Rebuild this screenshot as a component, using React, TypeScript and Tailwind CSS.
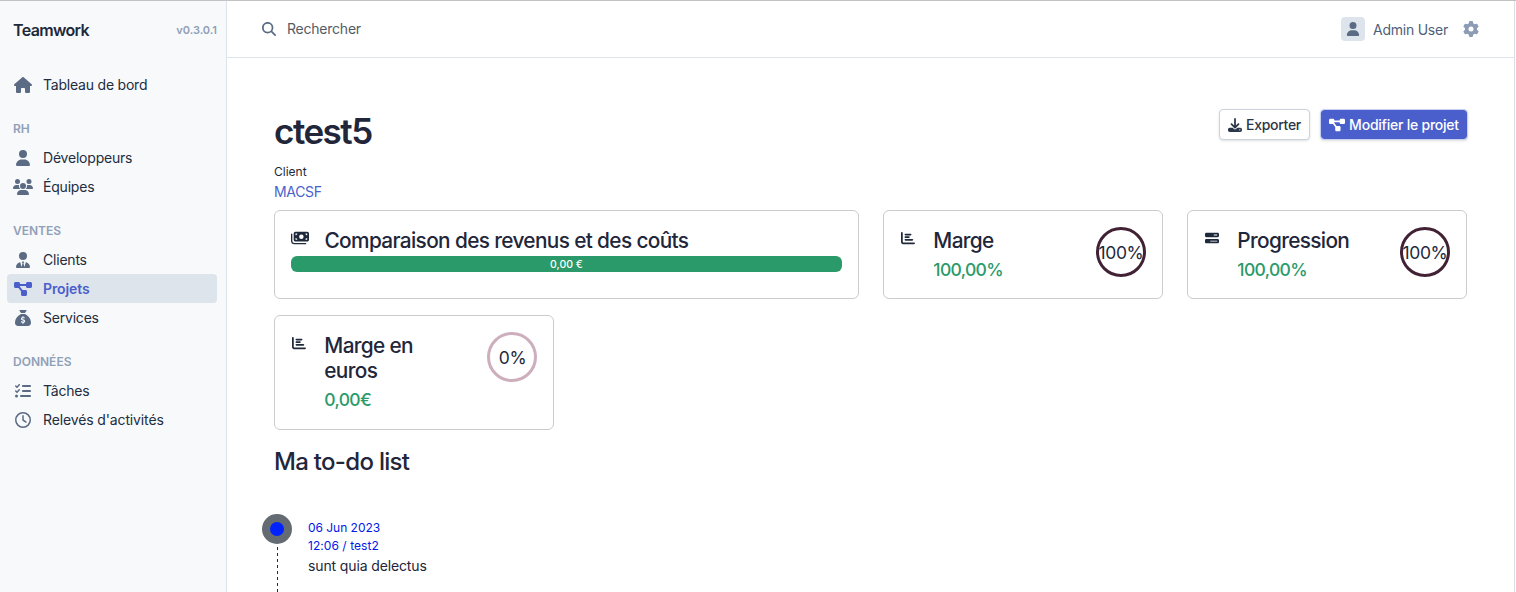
import type { ReactNode } from "react";
import type { IconType } from "react-icons";
import {
  FaBarsProgress,
  FaChartBar,
  FaDiagramProject,
  FaDownload,
  FaGear,
  FaHouse,
  FaListCheck,
  FaMagnifyingGlass,
  FaMoneyBills,
  FaRegClock,
  FaSackDollar,
  FaUser,
  FaUsers,
  FaUserTie,
} from "react-icons/fa6";

type ItemProps = { icon: IconType; label: string; active?: boolean; size?: string; spacing?: string };

function NavItem({ icon: Icon, label, active, size = "size-4", spacing = "tracking-[-0.21px]" }: ItemProps) {
  return (
    <a
      className={`flex h-[29px] items-center rounded px-[6px] ${
        active ? "bg-[#dee4ec] font-semibold text-[#4a5fcb]" : "text-[#222d40]"
      }`}
    >
      <span className={`flex w-5 justify-center ${active ? "" : "text-[#5b6b84]"}`}>
        <Icon className={`${size} shrink-0`} />
      </span>
      <span className={`ml-[10px] whitespace-nowrap text-[14px] ${spacing}`}>{label}</span>
    </a>
  );
}

function NavTitle({ children }: { children: ReactNode }) {
  return (
    <h2 className="mt-[17px] flex h-[25px] items-center px-[6px] text-[12px] font-semibold text-[#90a0b7]">
      {children}
    </h2>
  );
}

function Ring({ value, full }: { value: string; full?: boolean }) {
  return (
    <div
      className={`flex size-[50px] shrink-0 items-center justify-center rounded-full border-[3px] pt-0.5 text-[17.5px] tracking-[-0.4px] text-[#1e293b] ${
        full ? "border-[#412234]" : "border-[#cdaebd] pl-px"
      }`}
    >
      {value}
    </div>
  );
}

type StatProps = { icon: IconType; title: string; amount: string; ring: string; full?: boolean; className?: string };

function StatCard({ icon: Icon, title, amount, ring, full, className = "" }: StatProps) {
  return (
    <section className={`flex w-[280px] items-start rounded-md border border-[#cbcbcd] p-4 ${className}`}>
      <span className="mt-[3.5px] flex w-4 shrink-0 justify-center text-[#1e293b]">
        <Icon className="size-[14px]" />
      </span>
      <div className="ml-[17.3px] flex-1">
        <h3 className="w-[120px] pt-px text-[20.8px] leading-[25px] font-medium tracking-[-0.65px] text-[#22263a]">
          {title}
        </h3>
        <p className="mt-1 text-[17.5px] leading-[25px] font-medium tracking-[-0.65px] text-[#2a9a6b]">{amount}</p>
      </div>
      <Ring value={ring} full={full} />
    </section>
  );
}

export default function App() {
  return (
    <div className="flex h-[592px] w-[1516px] overflow-hidden border-t border-[#c2c2c4] bg-white font-['Inter',sans-serif] text-[14px] text-[#22263a]">
      <aside className="w-[227px] shrink-0 border-r border-[#dee4ec] bg-[#f8f9fb] pr-[9px] pl-[7px]">
        <div className="flex h-[58px] items-center justify-between pl-[6px]">
          <span className="text-[16px] font-semibold tracking-[-0.65px] text-[#1e293b]">Teamwork</span>
          <span className="text-[11px] font-semibold text-[#90a0b7]">v0.3.0.1</span>
        </div>
        <nav className="pt-[11px]">
          <NavItem icon={FaHouse} label="Tableau de bord" size="size-[18px]" />
          <NavTitle>RH</NavTitle>
          <div className="pt-0.5">
            <NavItem icon={FaUser} label="Développeurs" />
            <NavItem icon={FaUsers} label="Équipes" size="size-5" />
          </div>
          <NavTitle>VENTES</NavTitle>
          <div className="pt-0.5">
            <NavItem icon={FaUserTie} label="Clients" />
            <NavItem icon={FaDiagramProject} label="Projets" active size="size-[18px]" spacing="tracking-[-0.1px]" />
            <NavItem icon={FaSackDollar} label="Services" />
          </div>
          <NavTitle>DONNÉES</NavTitle>
          <div className="pt-0.5">
            <NavItem icon={FaListCheck} label="Tâches" />
            <NavItem icon={FaRegClock} label="Relevés d'activités" spacing="tracking-[-0.13px]" />
          </div>
        </nav>
      </aside>

      <div className="flex w-[1288px] shrink-0 flex-col border-r border-[#dedfe2]">
        <header className="flex h-[57px] shrink-0 items-center justify-between border-b border-[#dee4ec] pr-[35px] pl-[35px]">
          <div className="flex items-center">
            <FaMagnifyingGlass className="size-[14px] text-[#5b6b84]" />
            <span className="-mt-0.5 ml-[11px] text-[14px] tracking-[-0.23px] text-[#545c64]">Rechercher</span>
          </div>
          <div className="flex items-center">
            <span className="flex size-6 items-center justify-center rounded bg-[#dee4ec]">
              <FaUser className="size-[14px] text-[#5b6b84]" />
            </span>
            <span className="ml-2 text-[14px] tracking-[-0.23px] text-[#4f5f78]">Admin User</span>
            <FaGear className="ml-[15px] size-4 text-[#8c9cb4]" />
          </div>
        </header>

        <main className="pr-[46px] pl-[47px]">
          <div className="flex h-[104px] items-start justify-between">
            <h1 className="mt-[52px] text-[35px] leading-[42px] font-semibold tracking-[-1.5px]">ctest5</h1>
            <div className="mt-[51px] flex gap-[10px]">
              <button className="flex h-[31px] w-[91px] items-center justify-center gap-1 rounded border border-[#cbd3df] bg-white text-[14px] font-medium tracking-[-0.3px] text-[#2b3648] shadow-sm">
                <FaDownload className="size-[14px]" />
                <span>Exporter</span>
              </button>
              <button className="flex h-[31px] w-[148px] items-center justify-center gap-1 rounded border border-[#c8cff0] bg-[#4a5fcb] bg-clip-padding text-[14px] font-medium tracking-[-0.23px] text-white shadow-sm">
                <FaDiagramProject className="size-4" />
                <span>Modifier le projet</span>
              </button>
            </div>
          </div>
          <p className="text-[12px] leading-[20px] text-[#1e293b]">Client</p>
          <a className="block text-[14px] leading-[20px] tracking-[-0.35px] text-[#4a5fcb]">MACSF</a>

          <div className="mt-2 flex flex-wrap gap-x-6 gap-y-4">
            <section className="h-[89px] w-[585px] rounded-md border border-[#cbcbcd] p-4">
              <div className="flex items-start">
                <FaMoneyBills className="mt-[2px] size-[18px] shrink-0 text-[#1e293b]" />
                <h3 className="ml-[15.5px] pt-px text-[20.8px] leading-[25px] font-medium tracking-[-0.63px]">
                  Comparaison des revenus et des coûts
                </h3>
              </div>
              <div className="mt-[3px] flex h-4 items-center justify-center rounded-md bg-[#2a9a6b] pt-px text-[10.5px] font-medium text-white">
                0,00 €
              </div>
            </section>
            <StatCard icon={FaChartBar} title="Marge" amount="100,00%" ring="100%" full className="h-[89px]" />
            <StatCard icon={FaBarsProgress} title="Progression" amount="100,00%" ring="100%" full className="h-[89px]" />
            <StatCard icon={FaChartBar} title="Marge en euros" amount="0,00€" ring="0%" className="h-[115px]" />
          </div>

          <h2 className="mt-[17px] text-[24px] leading-[30px] font-medium tracking-[-0.7px]">Ma to-do list</h2>

          <div className="mt-[37px] -ml-3 flex">
            <div className="flex w-[30px] flex-col items-center">
              <span className="flex size-[30px] items-center justify-center rounded-full bg-[#646b72]">
                <span className="size-[14px] rounded-full bg-[#0022ff]" />
              </span>
              <svg className="mt-[3px] ml-px" width="1" height="60">
                <line x1="0.5" y1="0" x2="0.5" y2="60" stroke="#22263a" strokeWidth="1" strokeDasharray="3 3" />
              </svg>
            </div>
            <div className="ml-4 pt-[5px]">
              <p className="text-[12px] leading-[18px] tracking-[-0.03px] text-[#0018e8]">06 Jun 2023</p>
              <p className="text-[12px] leading-[18px] tracking-[0.05px] text-[#0018e8]">12:06 / test2</p>
              <p className="text-[14px] leading-[21px] tracking-[-0.13px]">sunt quia delectus</p>
            </div>
          </div>
        </main>
      </div>
    </div>
  );
}
